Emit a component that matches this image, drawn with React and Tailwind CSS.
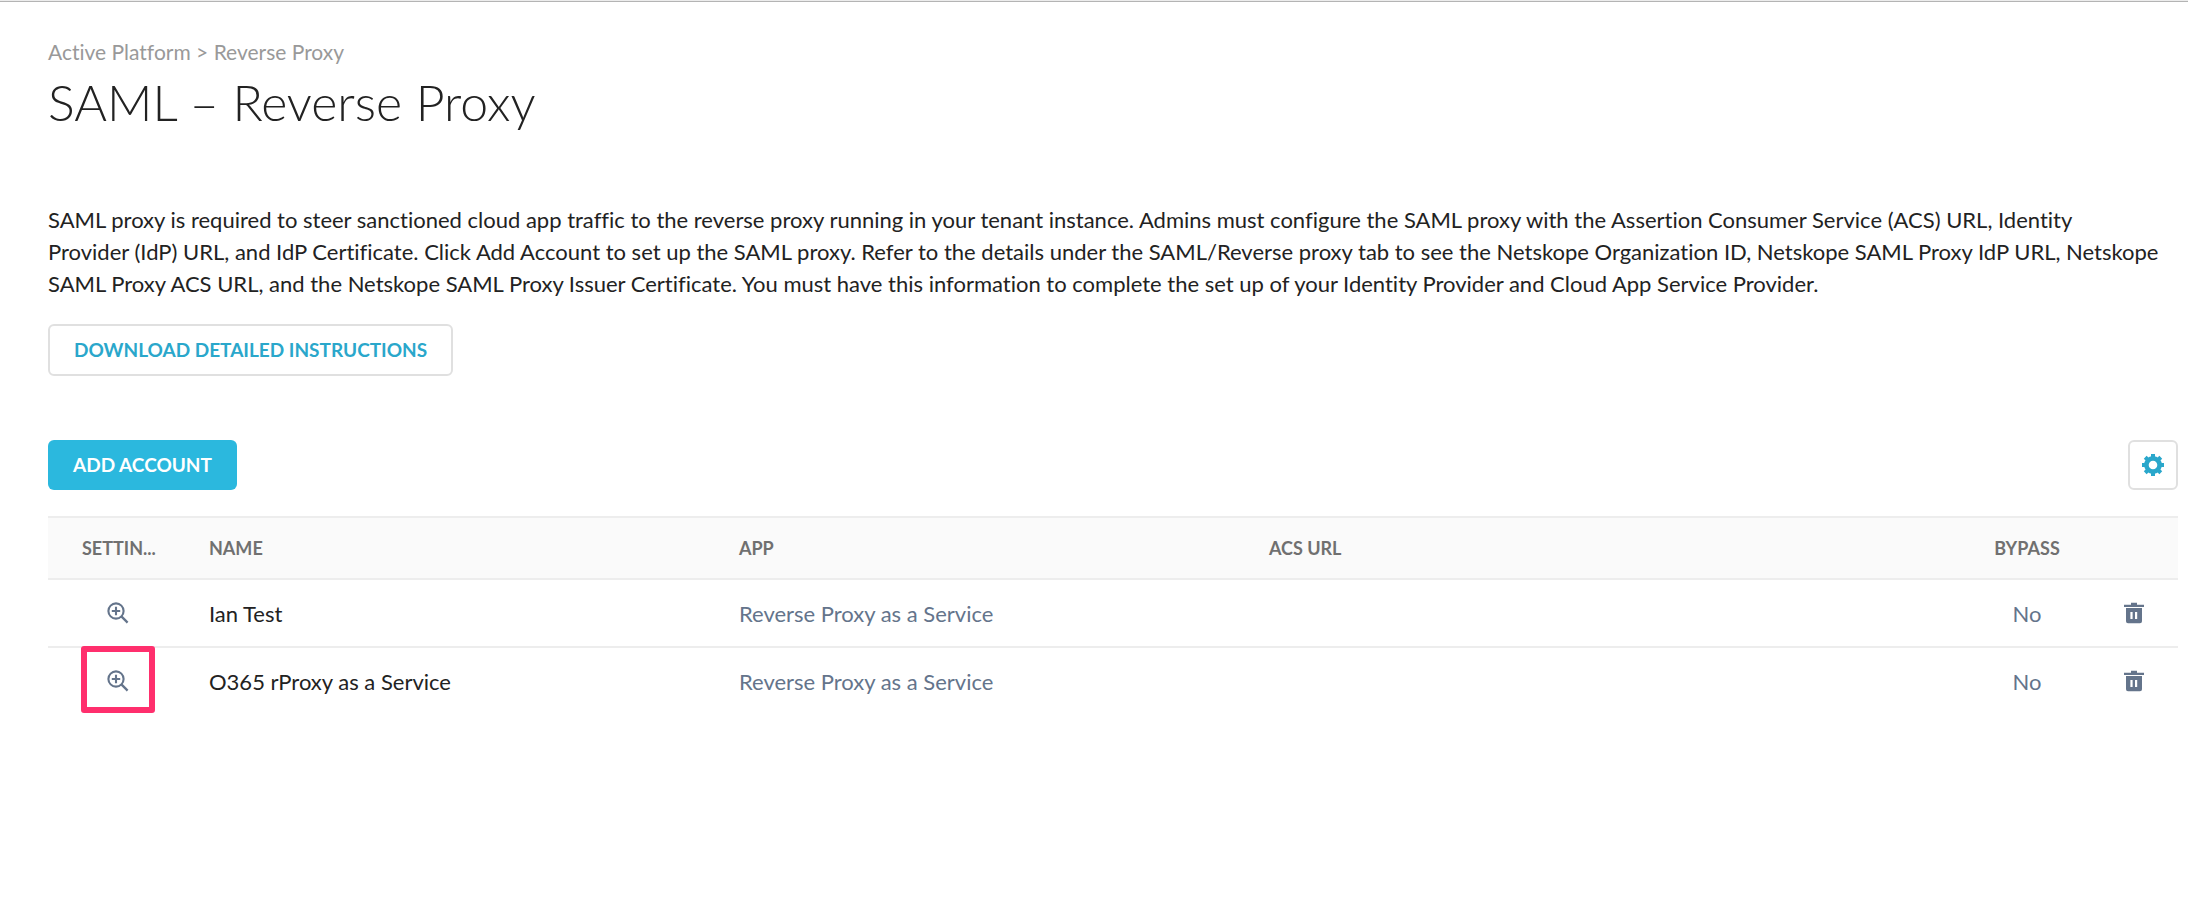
const rows = [
  { name: "Ian Test", app: "Reverse Proxy as a Service", acs: "", bypass: "No", marked: false },
  { name: "O365 rProxy as a Service", app: "Reverse Proxy as a Service", acs: "", bypass: "No", marked: true },
];

function ZoomInIcon() {
  return (
    <svg width="22" height="22" viewBox="0 0 22 22" fill="none" stroke="#64748b" strokeWidth="2.1" aria-hidden="true">
      <circle cx="9" cy="9" r="7.6" />
      <path d="M4.8 9h8.4M9 4.8v8.4" />
      <path d="M14.4 14.4l6.2 6.2" strokeWidth="2.3" />
    </svg>
  );
}

function TrashIcon() {
  return (
    <svg width="20" height="22" viewBox="0 0 20 22" fill="#64748b" aria-hidden="true">
      <path d="M7 .8h6v2h7v2.1H0V2.8h7z" />
      <path fillRule="evenodd" d="M2 6h16v13.2a2 2 0 0 1-2 2H4a2 2 0 0 1-2-2zM6.4 10v7h2.2v-7zM11 10v7h2.2v-7z" />
    </svg>
  );
}

function GearIcon() {
  return (
    <svg width="22" height="22" viewBox="-11 -11 22 22" aria-hidden="true">
      <circle r="6.6" fill="none" stroke="#2aa7cb" strokeWidth="4.6" />
      {[0, 45, 90, 135].map((angle) => (
        <g key={angle} transform={`rotate(${angle})`} fill="#2aa7cb">
          <rect x="-2" y="-11" width="4" height="5" />
          <rect x="-2" y="6" width="4" height="5" />
        </g>
      ))}
    </svg>
  );
}

export default function App() {
  return (
    <div className="min-h-screen border-t border-[#ececec] bg-white font-['Lato',sans-serif] text-[#222222] [font-variant-ligatures:none]">
      <main className="border-t border-[#b4b4b4] pt-[35px] pr-[10px] pb-12 pl-12">
        <nav aria-label="Breadcrumb" className="text-[21px] leading-[30px] text-[#999999]">
          Active Platform &gt; Reverse Proxy
        </nav>
        <h1 className="mt-[3px] text-[50px] leading-[64px] font-light">SAML – Reverse Proxy</h1>

        <p className="mt-[70px] text-[22px] leading-8">
          SAML proxy is required to steer sanctioned cloud app traffic to the reverse proxy running in your tenant
          instance. Admins must configure the SAML proxy with the Assertion Consumer Service (ACS) URL, Identity
          <br />
          Provider (IdP) URL, and IdP Certificate. Click Add Account to set up the SAML proxy. Refer to the details
          under the SAML/Reverse proxy tab to see the Netskope Organization ID, Netskope SAML Proxy IdP URL, Netskope
          <br />
          SAML Proxy ACS URL, and the Netskope SAML Proxy Issuer Certificate. You must have this information to
          complete the set up of your Identity Provider and Cloud App Service Provider.
        </p>

        <button
          type="button"
          className="mt-6 h-[52px] rounded-md border-2 border-[#e0e0e0] px-6 text-[19px] font-bold text-[#2aa7cb]"
        >
          DOWNLOAD DETAILED INSTRUCTIONS
        </button>

        <div className="mt-16 flex items-center justify-between">
          <button type="button" className="h-[50px] rounded-md bg-[#2bb8de] px-[25px] text-[19px] font-bold text-white">
            ADD ACCOUNT
          </button>
          <button
            type="button"
            aria-label="Table settings"
            className="flex size-[50px] items-center justify-center rounded-md border-2 border-[#e0e0e0]"
          >
            <GearIcon />
          </button>
        </div>

        <table className="mt-[26px] w-full table-fixed border-separate border-spacing-0 text-left">
          <colgroup>
            <col className="w-[141px]" />
            <col className="w-[24.88%]" />
            <col className="w-[24.88%]" />
            <col />
            <col className="w-[126px]" />
            <col className="w-[88px]" />
          </colgroup>
          <thead>
            <tr className="h-16 bg-[#fafafa] text-[18px] text-[#707070] *:border-y-2 *:border-[#ededed] *:p-0 *:font-bold">
              <th scope="col"><div className="pl-[34px]">SETTIN...</div></th>
              <th scope="col"><div className="pl-5">NAME</div></th>
              <th scope="col"><div className="pl-5">APP</div></th>
              <th scope="col"><div className="pl-5">ACS URL</div></th>
              <th scope="col" className="text-center">BYPASS</th>
              <td />
            </tr>
          </thead>
          <tbody>
            {rows.map((row) => (
              <tr
                key={row.name}
                className="h-[68px] text-[22px] text-[#64748b] *:border-b-2 *:border-[#ededed] *:p-0 last:*:border-transparent"
              >
                <td>
                  <div className="relative ml-[33px] flex h-[66px] w-[74px] items-center justify-center">
                    <button type="button" aria-label={`View settings for ${row.name}`}>
                      <ZoomInIcon />
                    </button>
                    {row.marked && (
                      <span className="pointer-events-none absolute inset-x-0 -top-[2px] h-[67px] rounded-[3px] border-6 border-[#ff2f6d]" />
                    )}
                  </div>
                </td>
                <td className="text-[#222222]"><div className="pl-5">{row.name}</div></td>
                <td><div className="pl-5">{row.app}</div></td>
                <td><div className="pl-5">{row.acs}</div></td>
                <td className="text-center">{row.bypass}</td>
                <td>
                  <button type="button" aria-label={`Delete ${row.name}`} className="mx-auto block">
                    <TrashIcon />
                  </button>
                </td>
              </tr>
            ))}
          </tbody>
        </table>
      </main>
    </div>
  );
}
